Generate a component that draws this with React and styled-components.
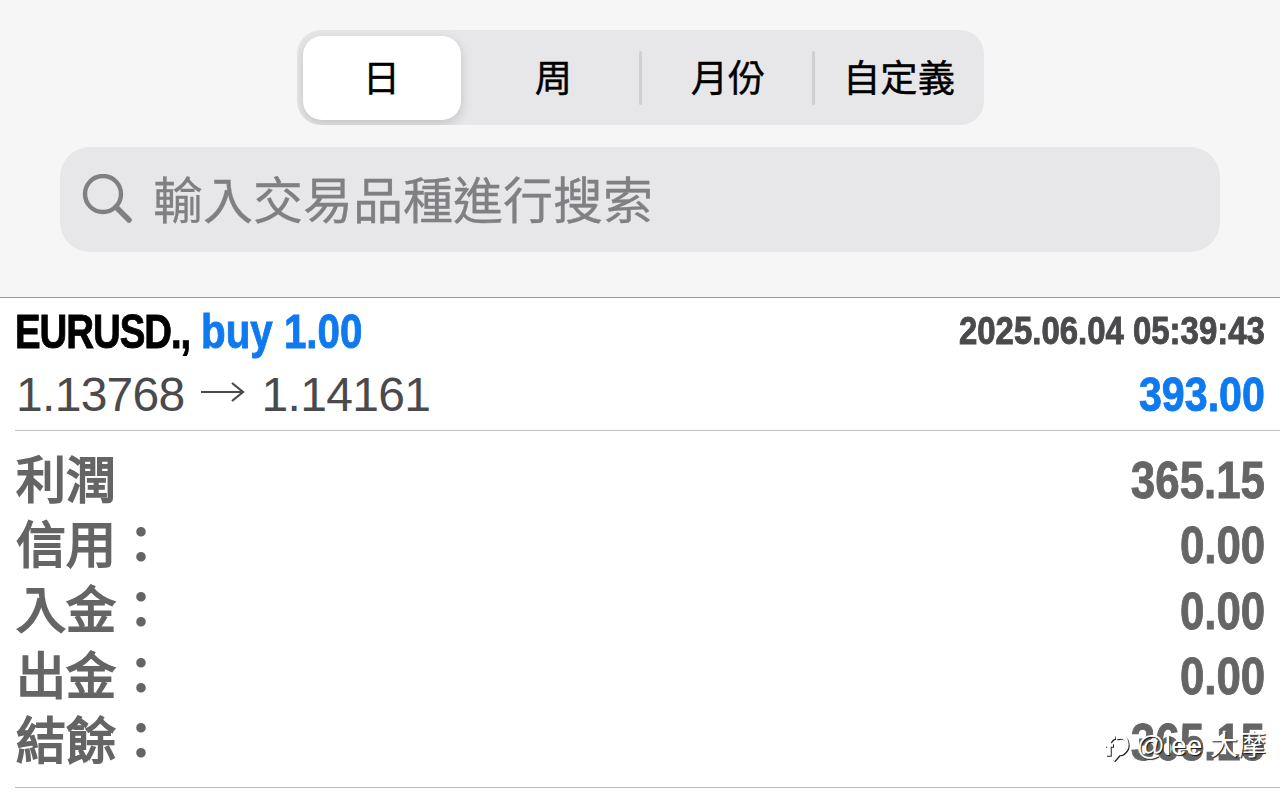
import React from "react";
import styled, { createGlobalStyle } from "styled-components";

const GlobalStyle = createGlobalStyle`
  * {
    box-sizing: border-box;
  }

  body {
    margin: 0;
    background: #fff;
    overflow: hidden;
    font-family: "Liberation Sans", "Noto Sans CJK TC", sans-serif;
  }
`;

const Page = styled.div`
  position: relative;
  width: 1280px;
  height: 794px;
  overflow: hidden;
  background: #fff;
`;

const Header = styled.header`
  display: flex;
  flex-direction: column;
  align-items: center;
  gap: 22px;
  height: 298px;
  padding-top: 30px;
  background: #f6f6f6;
  border-bottom: 1px solid #98989a;
`;

const Tabs = styled.div`
  display: flex;
  align-items: center;
  width: 687px;
  height: 95px;
  padding-left: 6px;
  border-radius: 24px;
  background: #e7e7e9;
  overflow: hidden;
`;

const Tab = styled.button`
  flex: none;
  width: ${({ $width }) => $width}px;
  height: 84px;
  padding: 0 0 3px ${({ $shift }) => $shift || 0}px;
  border: 0;
  border-radius: 19px;
  background: ${({ $active }) => ($active ? "#fff" : "transparent")};
  box-shadow: ${({ $active }) => ($active ? "0 4px 12px rgba(0, 0, 0, 0.16)" : "none")};
  color: #000;
  font-family: "Noto Sans CJK TC", sans-serif;
  font-size: 37.3px;
  font-weight: 400;
  line-height: 80px;
  white-space: nowrap;
  -webkit-text-stroke: 0.4px #000;
`;

const Divider = styled.span`
  flex: none;
  width: 3px;
  height: 54px;
  border-radius: 2px;
  background: #cfcfd2;
`;

const SearchBar = styled.div`
  display: flex;
  align-items: center;
  width: 1160px;
  height: 105px;
  padding-left: 22px;
  border-radius: 30px;
  background: #e7e7e9;
  color: #808084;
`;

const SearchIcon = styled.svg`
  width: 52px;
  height: 52px;
  margin-right: 19px;
`;

const Placeholder = styled.span`
  font-family: "Noto Sans CJK TC", sans-serif;
  font-size: 50px;
  line-height: 98px;
  padding-bottom: 6px;
  -webkit-text-stroke: 0.3px #808084;
`;

const Deal = styled.section`
  height: 133px;
  margin-left: 15px;
  padding: 2px 15px 0 0;
  border-bottom: 1px solid #c2c2c4;
`;

const Row = styled.div`
  display: flex;
  align-items: center;
  justify-content: space-between;
  height: ${({ $height }) => $height}px;
`;

const Group = styled.div`
  display: flex;
  align-items: center;
`;

const CondensedBox = styled.span`
  display: flex;
  width: ${({ $width }) => $width}px;
  justify-content: ${({ $end }) => ($end ? "flex-end" : "flex-start")};
  color: ${({ $color }) => $color};
  font-size: ${({ $size }) => $size}px;
  font-weight: 700;
  line-height: 1.2;
  letter-spacing: ${({ $spacing }) => $spacing || 0}px;
  white-space: nowrap;
  -webkit-text-stroke: 0.9px ${({ $color }) => $color};
`;

const CondensedText = styled.span`
  flex: none;
  transform: scaleX(${({ $scale }) => $scale});
  transform-origin: ${({ $end }) => ($end ? "right" : "left")} center;
`;

const Prices = styled.div`
  display: flex;
  align-items: center;
  padding: 1px 0 0 1px;
  color: #4a4a4d;
  font-size: 48px;
  line-height: 56px;
  letter-spacing: -0.7px;
`;

const Arrow = styled.svg`
  width: 46px;
  height: 24px;
  margin: 0 16px 6px 15px;
`;

const Summary = styled.section`
  height: 357px;
  margin-left: 15px;
  padding: 17px 15px 0 0;
  border-bottom: 1px solid #bcbcbe;
`;

const Label = styled.span`
  padding: 0 0 9px 1px;
  color: #656565;
  font-family: "Noto Sans CJK TC", sans-serif;
  font-size: 50px;
  font-weight: 400;
  line-height: 57px;
  -webkit-text-stroke: 1.9px #656565;
`;

const Watermark = styled.div`
  position: absolute;
  right: 14px;
  bottom: 28px;
  display: flex;
  align-items: center;
  color: #fff;
  font-family: "Liberation Sans", "Noto Sans CJK SC", sans-serif;
  font-size: 28px;
  line-height: 40px;
  white-space: pre;
  text-shadow: 1px 1px 1px #111;
`;

const WatermarkLogo = styled.svg`
  width: 26px;
  height: 30px;
  margin: 4px 6px 0 0;
  filter: drop-shadow(1px 1px 0.5px #222);
`;

const totals = [
  { label: "利潤", value: "365.15" },
  { label: "信用：", value: "0.00" },
  { label: "入金：", value: "0.00" },
  { label: "出金：", value: "0.00" },
  { label: "結餘：", value: "365.15" },
];

const Condensed = ({ width, size, color, scale, spacing, end, children }) => (
  <CondensedBox $width={width} $size={size} $color={color} $spacing={spacing} $end={end}>
    <CondensedText $scale={scale} $end={end}>
      {children}
    </CondensedText>
  </CondensedBox>
);

const App = () => {
  return (
    <>
      <GlobalStyle />
      <Page>
        <Header>
          <Tabs>
            <Tab $active $width={158}>日</Tab>
            <Tab $width={178} $shift={8}>周</Tab>
            <Divider />
            <Tab $width={170} $shift={3}>月份</Tab>
            <Divider />
            <Tab $width={169}>自定義</Tab>
          </Tabs>
          <SearchBar>
            <SearchIcon viewBox="0 0 52 52" fill="none" stroke="currentColor">
              <circle cx="21" cy="20" r="18" strokeWidth="4.4" />
              <path d="M34 33L47 46" strokeWidth="5.5" strokeLinecap="round" />
            </SearchIcon>
            <Placeholder>輸入交易品種進行搜索</Placeholder>
          </SearchBar>
        </Header>

        <Deal>
          <Row $height={64}>
            <Group>
              <Condensed width={185.5} size={48} color="#000" scale={0.8} spacing={-1.3}>EURUSD.,</Condensed>
              <Condensed width={170} size={48} color="#0f7af0" scale={0.84}>buy 1.00</Condensed>
            </Group>
            <Condensed width={320} size={38} color="#4a4a4d" scale={0.867} end>
              2025.06.04 05:39:43
            </Condensed>
          </Row>
          <Row $height={61}>
            <Prices>
              1.13768
              <Arrow viewBox="0 0 46 24" fill="none" stroke="currentColor" strokeWidth="2.2">
                <path d="M1 12H43M32 3L43 12L32 21" />
              </Arrow>
              1.14161
            </Prices>
            <Condensed width={200} size={48} color="#0f7af0" scale={0.857} end>393.00</Condensed>
          </Row>
        </Deal>

        <Summary>
          {totals.map(({ label, value }) => (
            <Row key={label} $height={65.4}>
              <Label>{label}</Label>
              <Condensed width={200} size={51} color="#656565" scale={0.86} end>{value}</Condensed>
            </Row>
          ))}
        </Summary>

        <Watermark>
          <WatermarkLogo viewBox="0 0 26 30" fill="none" stroke="#fff" strokeWidth="3.5">
            <path d="M2 21H5V12Q5 5 11 4M1 12H9" />
            <path d="M12 5Q19 2 22 7Q25 15 18 20Q14 21 12 20M15 20L9 27" />
          </WatermarkLogo>
          @lee 大摩
        </Watermark>
      </Page>
    </>
  );
};

export default App;
